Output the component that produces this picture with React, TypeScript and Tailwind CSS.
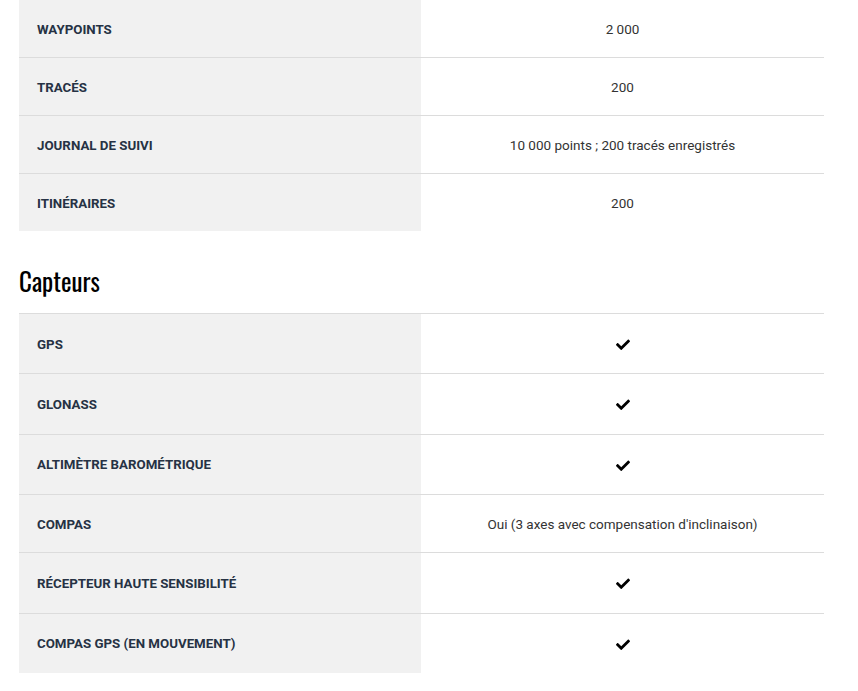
import React from "react";

type Row = { label: string; value?: string; check?: boolean };

const mem: Row[] = [
  { label: "Waypoints", value: "2 000" },
  { label: "Tracés", value: "200" },
  { label: "Journal de suivi", value: "10 000 points ; 200 tracés enregistrés" },
  { label: "Itinéraires", value: "200" },
];

const sensors: Row[] = [
  { label: "GPS", check: true },
  { label: "GLONASS", check: true },
  { label: "Altimètre barométrique", check: true },
  { label: "Compas", value: "Oui (3 axes avec compensation d'inclinaison)" },
  { label: "Récepteur haute sensibilité", check: true },
  { label: "Compas GPS (en mouvement)", check: true },
];

function Check() {
  return (
    <svg width="14" viewBox="0 -90 512 692" className="block h-[19.4px]" aria-hidden>
      <path
        fill="#000"
        d="M173.898 439.404l-166.4-166.4c-9.997-9.997-9.997-26.206 0-36.204l36.203-36.204c9.997-9.998 26.207-9.998 36.204 0L192 312.69 432.095 72.596c9.997-9.997 26.207-9.997 36.204 0l36.203 36.204c9.997 9.997 9.997 26.206 0 36.204l-294.4 294.401c-9.998 9.997-26.207 9.997-36.204-.001z"
      />
    </svg>
  );
}

function Table({ rows }: { rows: Row[] }) {
  return (
    <div className="flex flex-col">
      {rows.map((r) => (
        <div key={r.label} className="grid grid-cols-[402px_1fr] border-t border-[#dcdcdc]">
          <div className="bg-[#f1f1f1] pl-[18px] pr-4 pt-px flex items-center text-[13.3px] font-bold uppercase leading-[17px] text-[#263244]">
            {r.label}
          </div>
          <div className="pt-[21px] pb-[19px] flex items-center justify-center text-[13.5px] leading-[17px] text-[#333]">
            {r.check ? <Check /> : r.value}
          </div>
        </div>
      ))}
    </div>
  );
}

export default function App() {
  return (
    <div className="w-[858px] h-[691px] overflow-hidden bg-white" style={{ fontFamily: "Roboto, 'Liberation Sans', sans-serif" }}>
      <div className="mx-[19px] w-[805px] -mt-px">
        <Table rows={mem} />
        <h2
          className="pt-[35px] pb-[18px] text-[25px] leading-[29px] text-black font-normal"
          style={{ fontFamily: "Oswald, 'Liberation Sans Narrow', 'DejaVu Sans Condensed', sans-serif" }}
        >
          Capteurs
        </h2>
        <Table rows={sensors} />
      </div>
    </div>
  );
}
